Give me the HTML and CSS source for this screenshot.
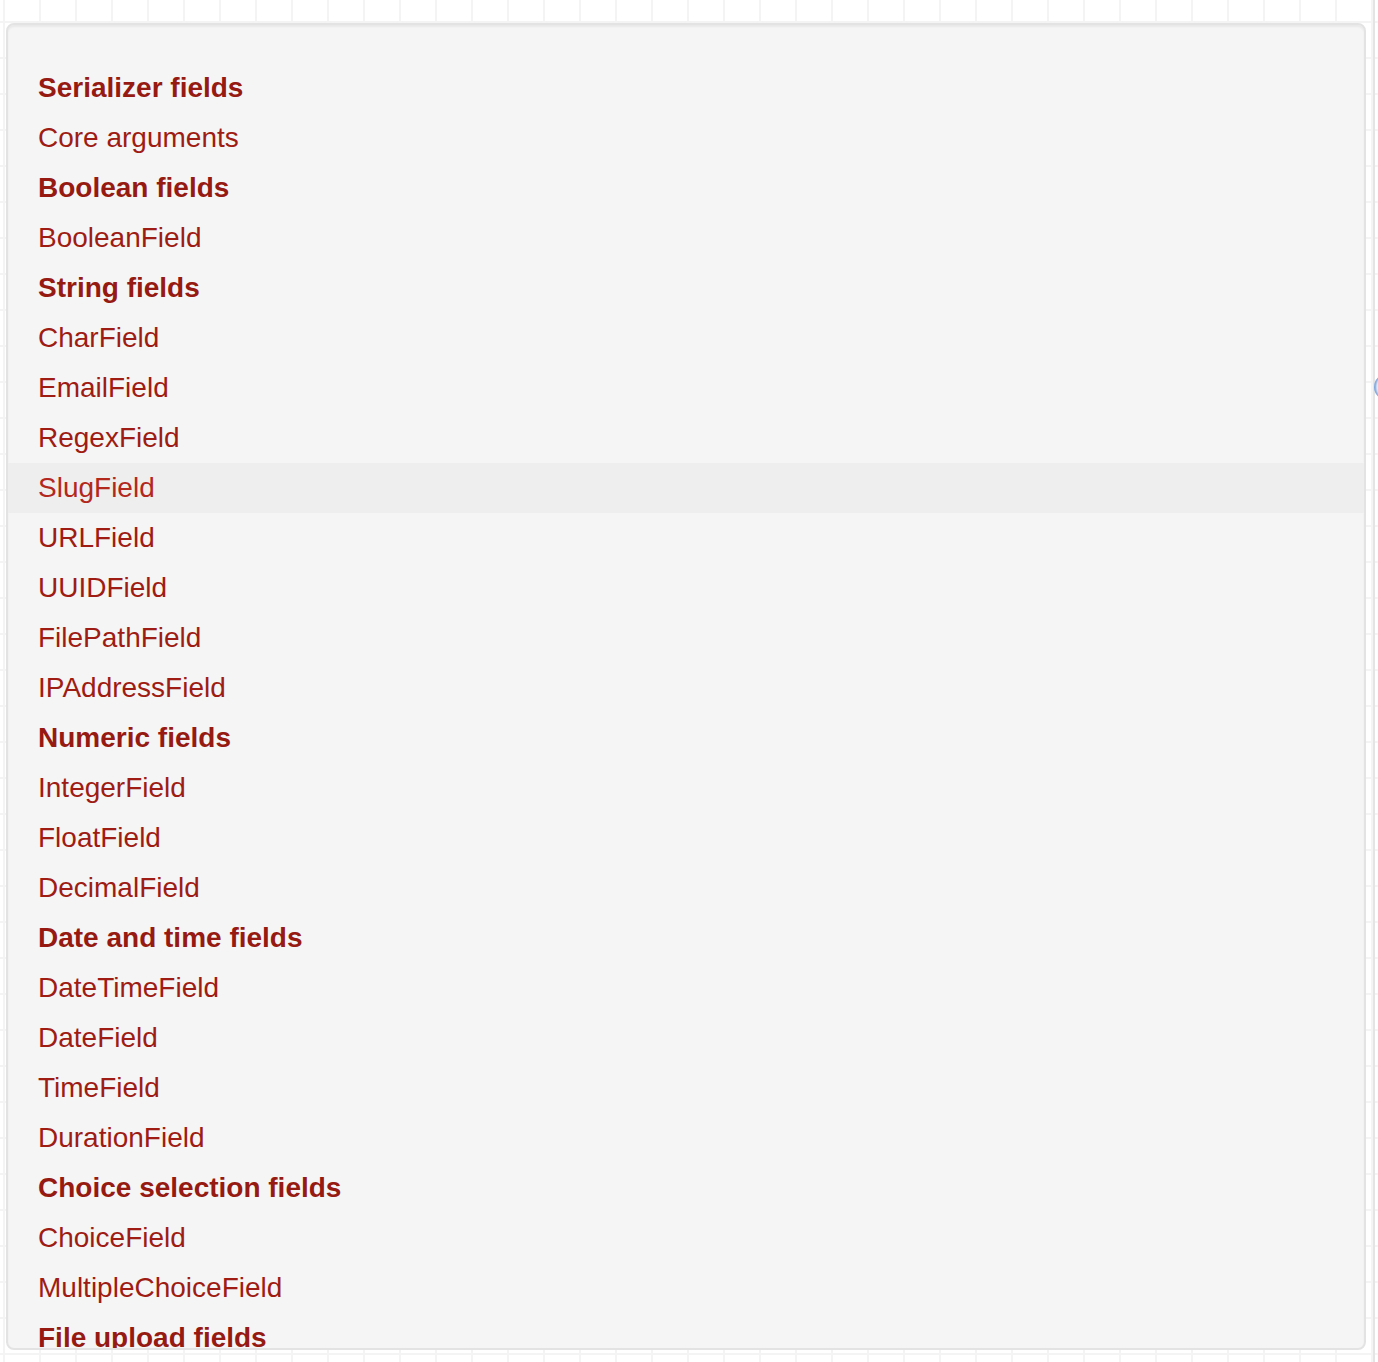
FILE: index.html
```html
<!DOCTYPE html>
<html lang="en">
<head>
<meta charset="utf-8">
<title>Serializer fields</title>
<link rel="stylesheet" href="styles.css">
</head>
<body>
<div class="page">
  <nav class="well">
    <ul class="nav-list">
      <li class="main"><a href="#">Serializer fields</a></li>
      <li><a href="#">Core arguments</a></li>
      <li class="main"><a href="#">Boolean fields</a></li>
      <li><a href="#">BooleanField</a></li>
      <li class="main"><a href="#">String fields</a></li>
      <li><a href="#">CharField</a></li>
      <li><a href="#">EmailField</a></li>
      <li><a href="#">RegexField</a></li>
      <li class="hover"><a href="#">SlugField</a></li>
      <li><a href="#">URLField</a></li>
      <li><a href="#">UUIDField</a></li>
      <li><a href="#">FilePathField</a></li>
      <li><a href="#">IPAddressField</a></li>
      <li class="main"><a href="#">Numeric fields</a></li>
      <li><a href="#">IntegerField</a></li>
      <li><a href="#">FloatField</a></li>
      <li><a href="#">DecimalField</a></li>
      <li class="main"><a href="#">Date and time fields</a></li>
      <li><a href="#">DateTimeField</a></li>
      <li><a href="#">DateField</a></li>
      <li><a href="#">TimeField</a></li>
      <li><a href="#">DurationField</a></li>
      <li class="main"><a href="#">Choice selection fields</a></li>
      <li><a href="#">ChoiceField</a></li>
      <li><a href="#">MultipleChoiceField</a></li>
      <li class="main"><a href="#">File upload fields</a></li>
    </ul>
  </nav>
  <div class="rule"></div>
</div>
<div class="blob"></div>
</body>
</html>
```
FILE: styles.css
```css
html, body {
  margin: 0;
  padding: 0;
  height: 100%;
}
body {
  background-color: #ffffff;
  background-image:
    linear-gradient(to right, #f4f4f4 2px, transparent 2px),
    linear-gradient(to bottom, #f4f4f4 2px, transparent 2px);
  background-size: 36px 36px;
  background-position: 3px 21px;
  font-family: "Liberation Sans", Arial, Helvetica, sans-serif;
  overflow: hidden;
}
.page {
  display: flex;
  align-items: flex-start;
  height: 1362px;
}
.well {
  box-sizing: border-box;
  width: 1360px;
  height: 1327px;
  margin: 23px 7px 0 6px;
  background: #f5f5f5;
  border: 2px solid #e3e3e3;
  border-radius: 8px;
  box-shadow: inset 0 2px 2px rgba(0, 0, 0, 0.05);
  overflow: hidden;
  flex-shrink: 0;
}
.nav-list {
  list-style: none;
  margin: 0;
  padding: 38px 0 0 0;
}
.nav-list li a {
  display: block;
  padding: 0 30px;
  height: 50px;
  line-height: 50px;
  font-size: 28px;
  color: #9e1c13;
  text-decoration: none;
  white-space: nowrap;
}
.nav-list li.main a {
  font-weight: bold;
  color: #961a11;
}
.nav-list li.hover a {
  background: #eeeeee;
  color: #b3281d;
}
.rule {
  width: 2px;
  height: 1362px;
  background: #e4e4e4;
  flex-shrink: 0;
}
.blob {
  position: absolute;
  left: 1374px;
  top: 374px;
  width: 26px;
  height: 26px;
  border-radius: 50%;
  background: #e6eefa;
  box-shadow: inset 2px 0 2px #7ea3d9;
}
```
